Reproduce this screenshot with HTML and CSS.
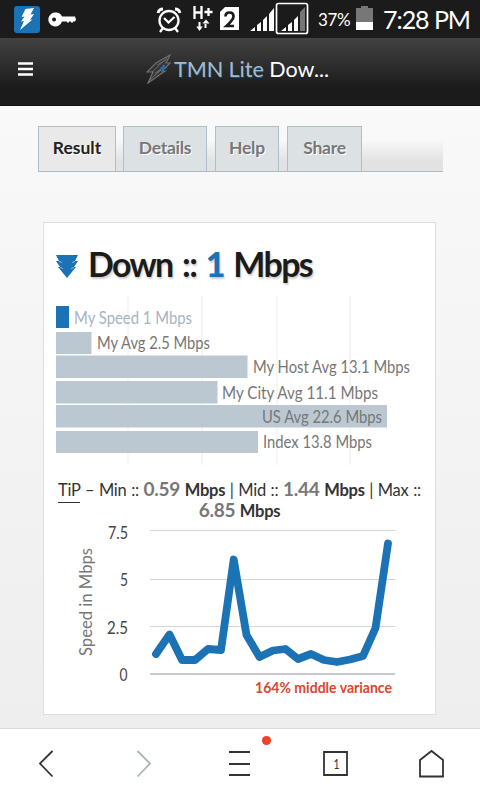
FILE: index.html
```html
<!DOCTYPE html>
<html lang="en">
<head>
<meta charset="utf-8">
<title>TMN Lite Download Result</title>
<link rel="stylesheet" href="styles.css">
</head>
<body>
<div class="status">
  <svg class="notifications" width="80" height="38" viewBox="0 0 80 38">
    <rect x="14" y="6" width="26" height="27" rx="3" fill="#1b72b5"/>
    <path d="M25.500 9l8.500-1-3.500 6.500 3.500-.5-4 6 2.500-.5L20 30l4-9-3 .5 3.500-5-3 .500z" fill="#fff"/>
    <path fill-rule="evenodd" d="M56 12.500a6.500 6.500 0 0 1 6 4h13l1 3-1 2H62a7 7 0 1 1-6-9zM54 17.500a2 2 0 1 0 .1 0z" fill="#fff"/>
    <path d="M68 20v2.500m4-2.500v2.500" stroke="#fff" stroke-width="2"/>
  </svg>
  <svg class="signals" width="160" height="38" viewBox="154 0 160 38">
    <g fill="none" stroke="#fff" stroke-width="2.300">
      <circle cx="169" cy="20.500" r="9.500"/><path d="M164 18l4.500 4.500 6-5.500M163 28l-3 4m15-4 3 4"/>
      <path d="M158 13q1-4 5-4m12 0q4 0 5 4" stroke-width="2.800"/>
      <path d="M194.500 6v13m7-13v13m-7-6.500h7M204.500 12h8m-4-4v8" stroke-width="2.300"/>
      <path d="M199.500 22v6m6-4v4" stroke-width="2"/>
    </g>
    <path d="M196.300 26.500h6.400l-3.200 4.500zM202.500 23.500h7l-3.500-4z" fill="#fff"/>
    <path d="M225 7h14v23h-19V12z" fill="#fff"/>
    <path d="M225.500 16.500q0-4 4-4t4 4q0 3-7 9.500h7.500" fill="none" stroke="#1b1b1b" stroke-width="2.700"/>
    <path d="M250 31l5-4v4zM257 25l4-3v9h-4zM263 20l4-4v15h-4zM269 14l5-6v23h-5zM281 31l5-4v4zM288 25l4-3v9h-4zM294 20l4-4v15h-4z" fill="#fff"/>
    <path d="M300 12l5-5v24h-5z" fill="#777"/>
    <rect x="276.500" y="3.500" width="31" height="30" rx="2" fill="none" stroke="#fff" stroke-width="1.700"/>
  </svg>
  <span class="percent">37%</span>
  <svg class="battery" width="17" height="24" viewBox="0 0 17 24"><path d="M0 2h5V0h7v2h5v14H0z" fill="#777"/><path d="M0 16h17v8H0z" fill="#fff"/></svg>
  <span class="time">7:28 PM</span>
</div>
<header class="header">
  <svg width="15" height="14" viewBox="0 0 15 14"><path d="M0 1.500h15M0 7h15M0 12.500h15" stroke="#fff" stroke-width="2.500"/></svg>
  <svg class="bolt" width="26" height="30" viewBox="0 0 26 30"><path d="M10 9L24 1l-4 8h4l-8 8h3L2 29l5-11H1z" fill="#333" stroke="#707070" stroke-width="1.200"/><path d="M6 18L21 4M4 26l15-15M9 19l9-6M11 11l9-5M8 22l7-6" stroke="#777" stroke-width=".8"/><path d="M17 10l2 3 3 1-4 1-1 3-1-3-3-1 3-1z" fill="#1b72b5"/></svg>
  <span class="brand"><b>TMN Lite</b> Dow...</span>
</header>
<main>
  <nav class="tabs">
    <div class="tab active"><span>Result</span></div>
    <div class="tab details"><span>Details</span></div>
    <div class="tab help"><span>Help</span></div>
    <div class="tab share"><span>Share</span></div>
  </nav>
  <section class="card">
    <h1><svg width="22" height="24" viewBox="0 0 22 24"><path d="M0 1h22l-3 6h3l-4 6h2L11 24 2 13h2L0 7h3z" fill="#1b72b5"/><path d="M3 7.500l3 1m13-1-3 1M4 13.500l3 1m11-1-3 1" stroke="#8dbadb"/></svg><span>Down :: <b>1</b> Mbps</span></h1>
    <svg class="bars" width="391" height="169" viewBox="44 296 391 169">
      <path d="M128 296v169M202 296v169M277 296v169M350 296v169" stroke="#f4f4f5" stroke-width="1.500"/>
      <path d="M56 306h13v22H56z" fill="#1b72b5"/>
      <path d="M56 332h35.500v22H56zM56 355.500h191.500v22.500H56zM56 381h161.500v22.500H56zM56 405h331v22.500H56zM56 431h202v22H56z" fill="#bbc8d2"/>
      <g class="labels">
        <text class="mine" x="74" y="324" textLength="118" lengthAdjust="spacingAndGlyphs">My Speed 1 Mbps</text>
        <text x="97" y="349" textLength="113" lengthAdjust="spacingAndGlyphs">My Avg 2.5 Mbps</text>
        <text x="253" y="373" textLength="157" lengthAdjust="spacingAndGlyphs">My Host Avg 13.1 Mbps</text>
        <text x="222" y="399" textLength="156" lengthAdjust="spacingAndGlyphs">My City Avg 11.1 Mbps</text>
        <text x="262" y="423" textLength="120" lengthAdjust="spacingAndGlyphs">US Avg 22.6 Mbps</text>
        <text x="263" y="448" textLength="109" lengthAdjust="spacingAndGlyphs">Index 13.8 Mbps</text>
      </g>
    </svg>
    <p class="tip"><u>TiP</u> – Min :: <b>0.59</b> <strong>Mbps</strong> | Mid :: <b>1.44</b> <strong>Mbps</strong> | Max ::<br><b>6.85</b> <strong>Mbps</strong></p>
    <svg class="line" width="391" height="190" viewBox="44 516 391 190">
      <path d="M150 530.500h245M150 579.500h245M150 626.500h245" stroke="#d4d4d6"/>
      <path d="M150 674h245" stroke="#b7b4c2" stroke-width="1.500"/>
      <g class="ticks"><text x="108" y="539" textLength="20" lengthAdjust="spacingAndGlyphs">7.5</text><text x="120" y="586" textLength="8" lengthAdjust="spacingAndGlyphs">5</text><text x="107" y="634" textLength="21" lengthAdjust="spacingAndGlyphs">2.5</text><text x="119.500" y="680.500" textLength="8" lengthAdjust="spacingAndGlyphs">0</text></g>
      <text class="axis" transform="translate(92 656) rotate(-90)" textLength="108" lengthAdjust="spacingAndGlyphs">Speed in Mbps</text>
      <polyline points="156,654 169.500,634.500 182,660 195,660 208,649 221,650 233.700,559.500 246.500,635 259.500,657 273,650.500 285.500,649 298,659 311,654 324,660 337,662 350,659.500 363,656 375.500,628 388,543.500" fill="none" stroke="#1b72b5" stroke-width="7.800" stroke-linecap="round" stroke-linejoin="round"/>
      <text class="variance" x="255" y="693" textLength="137" lengthAdjust="spacingAndGlyphs">164% middle variance</text>
    </svg>
  </section>
</main>
<footer class="toolbar">
  <svg width="96" height="71" viewBox="0 729 96 71"><path d="M52.500 751L40 763.500l12.500 13" class="stroke"/></svg>
  <svg width="96" height="71" viewBox="96 729 96 71"><path d="M137.500 751l12.500 12.500-12.500 13" class="stroke faded"/></svg>
  <svg width="96" height="71" viewBox="192 729 96 71"><path d="M229 752h21m-21 12h21m-21 11h21" class="stroke"/><circle cx="266.500" cy="740.500" r="4.600" fill="#f0432b"/></svg>
  <svg width="96" height="71" viewBox="288 729 96 71"><path d="M324 752h23v23h-23z" class="stroke"/><text x="333.500" y="768.500" class="count" textLength="6" lengthAdjust="spacingAndGlyphs">1</text></svg>
  <svg width="96" height="71" viewBox="384 729 96 71"><path d="M420 760l11.500-9 11.500 9v16.500h-23z" class="stroke"/></svg>
</footer>
</body>
</html>
```
FILE: styles.css
```css
* { box-sizing: border-box; }
body { margin: 0; width: 480px; height: 800px; display: flex; flex-direction: column; overflow: hidden; font-family: Lato, sans-serif; color: #222; }
svg { display: block; flex: none; }
.status { height: 38px; flex: none; background: #1b1b1b; display: flex; color: #fff; }
.signals { margin-left: 74px; }
.percent { width: 37px; margin-left: 4px; font-size: 17px; line-height: 40px; letter-spacing: -.4px; }
.battery { margin: 6px 0 0 1px; }
.time { margin-left: 10px; font-size: 25px; line-height: 38px; letter-spacing: -1.05px; white-space: nowrap; }
.header { height: 68px; flex: none; display: flex; align-items: center; padding: 0 0 6px 18px; background: linear-gradient(#424242, #1b1b1b 75%); border-bottom: 1px solid #111; color: #fff; }
.bolt { margin-left: 113px; }
.brand { margin-left: 2px; font-size: 21.5px; white-space: nowrap; letter-spacing: 0; }
.brand b { font-weight: 400; color: #a5bbc9; text-shadow: 1px 1px #164e76; }
main { height: 623px; flex: none; padding: 20px 37px 13px 38px; background: linear-gradient(#f9f9f9, #eee); border-bottom: 1px solid #dcdcdc; }
.tabs { display: flex; height: 46px; gap: 8px; background: linear-gradient(transparent 30%, #e2e2e3 80%); border-bottom: 1px solid #aeb9c0; }
.tab { width: 75px; border: 1px solid #adbfca; border-bottom: 0; background: #dce1e3; color: #777; font-size: 17.5px; font-weight: 700; line-height: 42px; text-align: center; text-shadow: 1px 1px #fff; }
.active { width: 78px; margin-right: -1px; color: #222; background: #e9e9ea; }
.details { width: 84px; }
.help { width: 64px; }
.tab span { display: inline-block; letter-spacing: -.25px; }
.active span { letter-spacing: 0; }
.card { width: 393px; height: 493px; margin: 50px 0 0 5px; border: 1px solid #dedede; background: #fff; }
h1 { display: flex; height: 73px; margin: 0; padding-left: 12px; font-size: 34px; line-height: 82px; letter-spacing: -1.7px; word-spacing: 3px; color: #1b1b1b; text-shadow: 1px 2px 2px #ccc; white-space: nowrap; }
h1 svg { margin: 31px 10px 0 0; }
h1 b { color: #1b72b5; }
.labels { font-size: 16.5px; fill: #777; }
.labels .mine { fill: #a6b4bf; }
.tip { height: 51px; margin: 0; padding-top: 14px; font-size: 16.5px; line-height: 19px; letter-spacing: -.25px; word-spacing: .65px; text-align: center; white-space: nowrap; color: #333; }
.tip u { text-decoration: none; border-bottom: 1.5px solid #333; padding-bottom: 2px; }
.tip b { font-size: 19px; line-height: 19px; color: #777; }
.ticks { font-size: 17px; fill: #444; }
.axis { font-size: 17px; fill: #777; }
.variance { font-size: 16px; font-weight: 700; fill: #dd452f; }
.toolbar { display: flex; height: 71px; flex: none; background: #fff; }
.stroke { fill: none; stroke: #333; stroke-width: 1.8; }
.faded { stroke: #aab4b8; }
.count { font-size: 13px; fill: #333; }
```
